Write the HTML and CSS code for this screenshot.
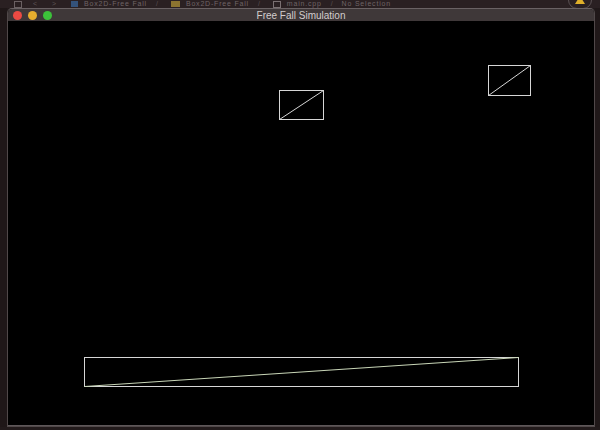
FILE: index.html
```html
<!DOCTYPE html>
<html>
<head>
<meta charset="utf-8">
<title>Free Fall Simulation</title>
<link rel="stylesheet" href="styles.css">
</head>
<body>
<div class="desk">
  <div class="toolbar">
    <div class="crumbs">
      <span class="tb-icon grid"></span>
      <span class="nav">&lt;</span>
      <span class="nav">&gt;</span>
      <span class="ico blue"></span><span class="crumb">Box2D-Free Fall</span>
      <span class="sep">/</span>
      <span class="ico yellow"></span><span class="crumb">Box2D-Free Fall</span>
      <span class="sep">/</span>
      <span class="ico file"></span><span class="crumb">main.cpp</span>
      <span class="sep">/</span>
      <span class="crumb">No Selection</span>
    </div>
    <div class="warn"><span class="tri"></span></div>
  </div>
  <div class="row">
    <div class="gutter"></div>
    <div class="window">
      <div class="titlebar">
        <div class="lights">
          <span class="light red"></span>
          <span class="light yellowl"></span>
          <span class="light green"></span>
        </div>
        <div class="title">Free Fall Simulation</div>
      </div>
      <div class="content">
        <svg class="canvas" width="586" height="404" viewBox="0 0 586 404">
          <g fill="none" stroke="#d6d6d6" stroke-width="1">
            <rect x="271.5" y="69.5" width="44" height="29"/>
            <line x1="271.5" y1="98.5" x2="315.5" y2="69.5"/>
            <rect x="480.5" y="44.5" width="42" height="30"/>
            <line x1="480.5" y1="74.5" x2="522.5" y2="44.5"/>
            <rect x="76.5" y="336.5" width="434" height="29"/>
          </g>
          <line x1="76.5" y1="365.5" x2="510.5" y2="336.5" stroke="#c9d6b8" stroke-width="1"/>
        </svg>
      </div>
    </div>
    <div class="gutter-r"></div>
  </div>
</div>
</body>
</html>
```
FILE: styles.css
```css
html, body {
  margin: 0;
  padding: 0;
  width: 600px;
  height: 430px;
  overflow: hidden;
  background: #221a1b;
}
.desk {
  width: 600px;
  height: 430px;
  display: flex;
  flex-direction: column;
}
.toolbar {
  height: 8px;
  overflow: hidden;
  background: #2a2022;
  display: flex;
  justify-content: space-between;
  font-family: "Liberation Sans", Arial, sans-serif;
  font-size: 7px;
  color: #6d6263;
}
.crumbs {
  display: flex;
  align-items: flex-start;
  padding-left: 14px;
  gap: 7px;
  line-height: 8px;
  white-space: nowrap;
}
.tb-icon.grid {
  width: 6px;
  height: 5px;
  margin-top: 1px;
  border: 1px solid #6b6163;
}
.nav {
  width: 12px;
  text-align: center;
  color: #5e5456;
}
.ico {
  width: 7px;
  height: 6px;
  margin-top: 1px;
  margin-left: 4px;
  margin-right: -1px;
}
.ico.blue { background: #34527a; }
.ico.yellow { background: #8c7430; width: 9px; }
.ico.file { background: none; border: 1px solid #7a7072; width: 6px; height: 5px; }
.crumb { color: #6f6466; letter-spacing: 0.8px; }
.sep { color: #5a5052; margin: 0 2px; }
.warn {
  width: 22px;
  height: 16px;
  margin-top: -9px;
  margin-right: 8px;
  border: 1px solid #5a5153;
  border-radius: 9px;
  display: flex;
  justify-content: center;
  align-items: flex-end;
}
.tri {
  width: 0;
  height: 0;
  border-left: 5px solid transparent;
  border-right: 5px solid transparent;
  border-bottom: 8px solid #e0b02a;
  margin-bottom: 4px;
}
.row {
  display: flex;
  height: 419px;
}
.gutter {
  width: 7px;
  background: #1f1718;
}
.gutter-r {
  flex: 1;
  background: #201819;
}
.window {
  width: 586px;
  border: 1px solid #504849;
  border-top-color: #6a6264;
  border-radius: 5px 5px 0 0;
  overflow: hidden;
  display: flex;
  flex-direction: column;
  background: #000;
}
.titlebar {
  height: 13px;
  background: #3f3839;
  display: flex;
  align-items: center;
  position: relative;
}
.lights {
  display: flex;
  gap: 6px;
  padding-left: 5px;
}
.light {
  width: 9px;
  height: 9px;
  border-radius: 50%;
}
.light.red { background: #ec4a43; }
.light.yellowl { background: #e6ae2e; }
.light.green { background: #3cc23a; }
.title {
  position: absolute;
  left: 0;
  right: 0;
  top: 0;
  text-align: center;
  font-family: "Liberation Sans", Arial, sans-serif;
  font-size: 10px;
  line-height: 14px;
  color: #d2cdcd;
}
.content {
  flex: 1;
  background: #000;
  border-bottom: 1px solid #5e5759;
}
.canvas {
  display: block;
}
```
